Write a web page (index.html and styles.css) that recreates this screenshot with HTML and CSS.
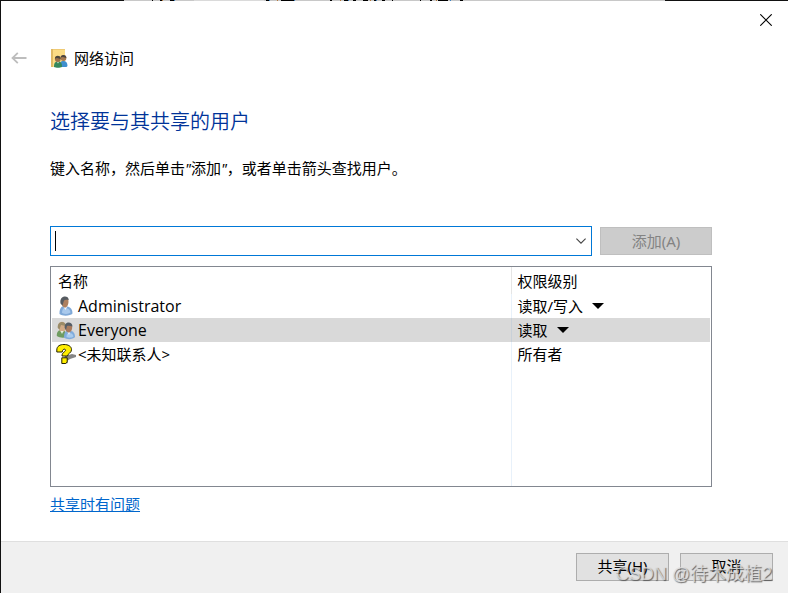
FILE: index.html
```html
<!DOCTYPE html>
<html lang="zh-CN">
<head>
<meta charset="utf-8">
<meta name="viewport" content="width=device-width, initial-scale=1">
<title>网络访问</title>
<link rel="stylesheet" href="styles.css">
</head>
<body>
<div class="backdrop">
  <svg width="541" height="1" shape-rendering="crispEdges" aria-hidden="true">
    <path d="M0 0h541v1H0z" fill="#c8c8c8"/>
    <path d="M70 0h70v1H70z" fill="#dadada"/>
    <path d="M28 0h1v1h-1zM36 0h2v1h-2zM46 0h4v1h-4zM142 0h3v1h-3zM157 0h13v1h-13zM206 0h2v1h-2zM220 0h4v1h-4zM229 0h3v1h-3zM239 0h5v1h-5zM250 0h2v1h-2zM258 0h3v1h-3zM268 0h1v1h-1zM296 0h1v1h-1zM306 0h2v1h-2zM314 0h10v1h-10zM336 0h3v1h-3z" fill="#000"/>
    <path d="M50 0h1v1h-1zM145 0h1v1h-1zM170 0h1v1h-1zM224 0h1v1h-1zM252 0h1v1h-1zM326 0h1v1h-1z" fill="#3a80c0"/>
    <path d="M38 0h1v1h-1zM153 0h1v1h-1zM216 0h1v1h-1zM246 0h1v1h-1zM312 0h1v1h-1z" fill="#b87838"/>
  </svg>
</div>
<div class="dialog" role="dialog" aria-labelledby="dialog-title">
  <div class="titlebar">
    <button class="icon-button" type="button" aria-label="关闭">
      <svg width="12" height="12" viewBox="0 0 12 12" fill="none" stroke="#000" stroke-width="1.1"><path d="M.3.3l11.4 11.4M11.7.3L.3 11.7"/></svg>
    </button>
  </div>
  <header class="header">
    <button class="icon-button" type="button" aria-label="返回" disabled>
      <svg width="16" height="12" viewBox="0 0 16 12" fill="none" stroke="#bdbdbd" stroke-width="1.8"><path d="M15.5 6H1.5M6.8.8L1.5 6l5.3 5.2"/></svg>
    </button>
    <svg class="app-icon" width="17" height="20" viewBox="0 0 17 20" aria-hidden="true">
      <path d="M0 1h14v18H0z" fill="#fbdc85"/>
      <path d="M0 1h2v18H0z" fill="#dfb964"/>
      <path d="M2 1h12v1H2z" fill="#efca74"/>
      <path d="M8.500 19c0-5 1.500-6 4-6s4 1.500 4 5l-1 1z" fill="#3f8fce"/>
      <circle cx="12.500" cy="10" r="2.900" fill="#a6794f"/>
      <path d="M9.600 9.500c0-3.500 5.800-3.500 5.800.5-2-.3-3-2-5.800-.5z" fill="#4a4540"/>
      <path d="M3 19c0-4 1-5.500 4-5.500s4 1.500 4 5.500c-2 1-6 1-8 0z" fill="#35875a"/>
      <path d="M5.800 13.500L7 15.500l1.200-2z" fill="#dceee2"/>
      <circle cx="6.800" cy="11" r="2.900" fill="#9c7048"/>
      <path d="M3.900 10.800c-.2-4 6-4 5.800.2-2-.2-3.300-2-5.800-.2z" fill="#4b463c"/>
    </svg>
    <span class="app-name">网络访问</span>
  </header>
  <main class="content">
    <h1 id="dialog-title">选择要与其共享的用户</h1>
    <label class="hint" for="user-name">键入名称，然后单击<span class="latin">"</span>添加<span class="latin">"</span>，或者单击箭头查找用户。</label>
    <div class="entry">
      <div class="combo">
        <span class="caret"></span>
        <input id="user-name" type="text" autocomplete="off">
        <button class="icon-button" type="button" aria-label="查找用户">
          <svg width="10" height="6" viewBox="0 0 10 6" fill="none" stroke="#444" stroke-width="1.1"><path d="M.4.6L5 5.200 9.600.6"/></svg>
        </button>
      </div>
      <button class="add" type="button" disabled>添加(A)</button>
    </div>
    <div class="list">
      <table>
        <thead>
          <tr><th scope="col">名称</th><th class="level" scope="col">权限级别</th></tr>
        </thead>
        <tbody>
          <tr>
            <td><div class="cell">
              <svg width="20" height="20" viewBox="0 0 20 20" aria-hidden="true">
                <path d="M3.500 18c-.2-5 1.500-8 5-8 4.500 0 8 2 8 7.500-2 2.500-10 3-13 .5z" fill="#7fa9d8"/>
                <path d="M6 17c0-3 1-5 3-5s5 1 5.500 4.500c-2 1.500-5 2-8.500.5z" fill="#a9c9ec"/>
                <path d="M7 10l2.500 4 2-4z" fill="#f2f6fb"/>
                <path d="M5 5c0-5 7.500-5.500 7.500 0 0 4-1.500 6.500-3.500 6.500S5 9 5 5z" fill="#ad8060"/>
                <path d="M4.500 7.500C3-.5 12.500-1.500 12.800 4 10 3.500 9 4 8 4.500L6.500 9.500z" fill="#565b61"/>
              </svg><span class="account">Administrator</span></div></td>
            <td class="level"><button class="pick" type="button">读取/写入<span class="arrow"></span></button></td>
          </tr>
          <tr class="selected">
            <td><div class="cell">
              <svg width="20" height="20" viewBox="0 0 20 20" aria-hidden="true">
                <path d="M.8 16c0-5 2-6 5-6s5 2 5 7c-3 1-7 1-10-1z" fill="#6f9c60"/>
                <path d="M2.500 5.500c0-5 7-5 7 0S8.500 12 6 12 2.500 9 2.500 5.500z" fill="#d1aa86"/>
                <path d="M1.800 8c-1-7.500 8-8 8-2L5 5 3.500 9.500z" fill="#9b8b67"/>
                <path d="M4.500 11L6 14l1.500-3z" fill="#e6f0df"/>
                <path d="M8 17.500c0-5 1.500-7 4.500-7 4 0 6.500 2 6.500 6.500-2 2.500-8 3-11 .5z" fill="#80acdc"/>
                <path d="M10.500 17c0-3 1-4 3-4s3.500 1 4 3.500c-2 1.500-5 1.500-7 .5z" fill="#a9cbed"/>
                <path d="M11 11l2 4 1.500-4z" fill="#f2f6fb"/>
                <path d="M9 7c0-5 7.200-5 7.200 0 0 3-1.400 5.500-3.500 5.500S9 10 9 7z" fill="#a87b5e"/>
                <path d="M8.700 8c-.8-7 7.800-7 7.800-1.500-2.500-1-4-1-5.500-.5L10 10z" fill="#555d66"/>
              </svg><span class="account">Everyone</span></div></td>
            <td class="level"><button class="pick" type="button">读取<span class="arrow"></span></button></td>
          </tr>
          <tr>
            <td><div class="cell">
              <svg width="20" height="20" viewBox="0 0 20 20" aria-hidden="true">
                <path d="M9 12l7-2 4 1v2l-6 2-3 2 1 2-3 1-2-2z" fill="#858585"/>
                <path d="M.8 6C.8 2 4 .5 8 .5s7.500 1.600 7.500 5.200c0 3.400-4 3.800-4 6.300H6c0-4 3.500-4 3.500-5.800C9.500 4.600 6.500 4.500 6.200 8L.8 8z" fill="#ffee00" stroke="#222000" stroke-width="1"/>
                <path d="M5.800 13.800h5.400v4.200l-1.500 1.500H5.800z" fill="#ffee00" stroke="#222000" stroke-width="1"/>
              </svg>&lt;未知联系人&gt;</div></td>
            <td class="level">所有者</td>
          </tr>
          <tr class="filler"><td></td><td class="level"></td></tr>
        </tbody>
      </table>
    </div>
    <a class="help" href="#help">共享时有问题</a>
  </main>
  <footer class="footer">
    <button type="button">共享(H)</button>
    <button type="button">取消</button>
    <span class="watermark">CSDN @待木成植2</span>
  </footer>
</div>
</body>
</html>
```
FILE: styles.css
```css
* {
  box-sizing: border-box;
}

body {
  margin: 0;
  min-height: 100vh;
  display: flex;
  flex-direction: column;
  background: #fff;
  color: #000;
  font: 15px/20px "Noto Sans", "Noto Sans CJK SC", sans-serif;
}

button,
input {
  font: inherit;
  color: inherit;
}

button {
  padding: 0;
}

svg {
  display: block;
  flex: none;
}

.backdrop {
  height: 1px;
  padding-left: 124px;
  background: #111;
  overflow: hidden;
}

.dialog {
  flex: 1;
  display: flex;
  flex-direction: column;
  border-left: 1px solid #111;
}

.titlebar {
  display: flex;
  justify-content: flex-end;
  padding: 6px 9px 8px;
}

.icon-button {
  display: flex;
  align-items: center;
  justify-content: center;
  flex: none;
  width: 26px;
  height: 26px;
  border: 0;
  background: none;
}

.header {
  display: flex;
  align-items: center;
  padding: 4px 6px 4px 5px;
}

.app-icon {
  margin-left: 19px;
}

.app-name {
  margin-left: 6px;
}

.content {
  flex: 1;
  display: flex;
  flex-direction: column;
  padding: 33px 76px 27px 49px;
}

h1 {
  margin: 0;
  color: #003399;
  font-size: 20px;
  font-weight: 350;
  line-height: 28px;
}

.hint {
  margin-top: 22px;
}

.latin {
  font-style: italic;
}

.entry {
  display: flex;
  align-items: center;
  gap: 8px;
  margin-top: 48px;
}

.combo {
  flex: 1;
  display: flex;
  align-items: center;
  height: 30px;
  padding-left: 4px;
  border: 1px solid #0078d7;
}

.caret {
  width: 1px;
  height: 20px;
  background: #000;
}

.combo input {
  flex: 1;
  min-width: 0;
  height: 26px;
  border: 0;
  outline: 0;
  background: none;
}

.combo .icon-button {
  width: 20px;
}

.add {
  width: 112px;
  height: 28px;
  border: 1px solid #bfbfbf;
  background: #ccc;
  color: #838383;
}

.list {
  flex: 1;
  display: flex;
  margin-top: 10px;
  padding-right: 1px;
  padding-left: 1px;
  border: 1px solid #828790;
}

table {
  width: 100%;
  border-collapse: collapse;
}

th,
td {
  height: 24px;
  padding: 0 6px;
  font-weight: 400;
  text-align: left;
}

th {
  height: 27px;
}

td {
  padding-left: 4px;
}

.level {
  width: 199px;
  border-left: 1px solid #e8f1fa;
  padding-left: 6px;
}

th.level {
  border-left-color: #e5e5e5;
}

.selected {
  background: #d9d9d9;
}

.selected .level {
  border-left-color: #c8d0d8;
}

.filler td {
  height: auto;
}

.cell {
  display: flex;
  align-items: center;
  gap: 2px;
}

.account {
  font-family: "Open Sans", sans-serif;
  font-size: 16px;
}

.pick {
  display: flex;
  align-items: center;
  gap: 9px;
  border: 0;
  background: none;
}

.arrow {
  border: 6px solid transparent;
  border-top-color: #000;
  border-bottom: 0;
}

.help {
  align-self: flex-start;
  margin-top: 7px;
  color: #0066cc;
}

.footer {
  position: relative;
  display: flex;
  justify-content: flex-end;
  gap: 11px;
  padding: 11px 15px 12px;
  border-top: 1px solid #dfdfdf;
  background: #f0f0f0;
}

.footer button {
  width: 93px;
  height: 28px;
  padding-bottom: 2px;
  border: 1px solid #adadad;
  background: #e1e1e1;
}

.watermark {
  position: absolute;
  right: 16px;
  bottom: 7px;
  color: rgba(225, 225, 225, 0.8);
  font: 18px/24px "Liberation Sans", "Noto Sans CJK SC", sans-serif;
  text-shadow: 1px 1px 1px rgba(70, 70, 70, 0.8);
  white-space: nowrap;
  pointer-events: none;
}
```
